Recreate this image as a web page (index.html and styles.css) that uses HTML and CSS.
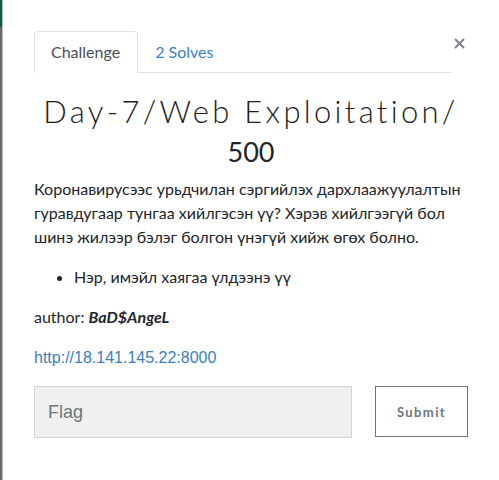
FILE: index.html
```html
<!DOCTYPE html>
<html>
<head>
<meta charset="utf-8">
<link rel="stylesheet" href="styles.css">
</head>
<body>
<div class="page">
  <div class="backdrop"><div class="backdrop-nav"></div></div>
  <div class="modal">
    <div class="modal-header">
      <ul class="tabs">
        <li class="tab active">Challenge</li>
        <li class="tab"><a class="tab-link" href="#">2 Solves</a></li>
      </ul>
      <button class="close" type="button" aria-label="Close">
        <svg width="11" height="11" viewBox="0 0 11 11"><path d="M1 1 L10 10 M10 1 L1 10" stroke="#7d838a" stroke-width="2" fill="none"/></svg>
      </button>
    </div>
    <div class="modal-body">
      <h3 class="challenge-name">Day-7/Web Exploitation/</h3>
      <h4 class="challenge-value">500</h4>
      <p class="desc">Коронавирусээс урьдчилан сэргийлэх дархлаажуулалтын гуравдугаар тунгаа хийлгэсэн үү? Хэрэв хийлгээгүй бол шинэ жилээр бэлэг болгон үнэгүй хийж өгөх болно.</p>
      <ul class="list">
        <li>Нэр, имэйл хаягаа үлдээнэ үү</li>
      </ul>
      <p class="desc">author: <em class="author">BaD$AngeL</em></p>
      <p class="desc"><a class="link" href="#">http://18.141.145.22:8000</a></p>
      <div class="flag-form">
        <input class="flag-input" type="text" placeholder="Flag">
        <button class="submit" type="button">Submit</button>
      </div>
    </div>
  </div>
</div>
</body>
</html>
```
FILE: styles.css
```css
* { box-sizing: border-box; }
html, body { margin: 0; padding: 0; background: #fff; }
body { font-family: Lato, "Noto Sans", sans-serif; color: #212529; font-size: 16px; line-height: 24px; }
.page { display: flex; width: 499px; height: 480px; overflow: hidden; }
.backdrop { width: 2px; flex: none; background: #6a6a6a; }
.backdrop-nav { height: 27px; background: #0b5f46; }
.modal { flex: 1; background: #fff; border-left: 1px solid #bdbdbd; padding: 31px 33px 0 31px; }
.modal-header { display: flex; align-items: flex-start; }
.tabs { list-style: none; margin: 0; padding: 0; display: flex; flex: 1; border-bottom: 1px solid #dee2e6; }
.tab { padding: 8px 17px 8px 16px; border: 1px solid transparent; border-top-left-radius: 4px; border-top-right-radius: 4px; margin-bottom: -1px; }
.tab.active { color: #495057; border-color: #dee2e6 #dee2e6 #fff; background: #fff; }
.tab-link { color: #3a7fbf; text-decoration: none; }
.close { border: 0; background: none; padding: 0; margin: 6px 3px 0 1px; width: 12px; height: 12px; display: flex; align-items: center; justify-content: center; cursor: pointer; }
.modal-body { padding-top: 0; }
.challenge-name { font-family: Lato, sans-serif; font-weight: 300; font-size: 31px; line-height: 40px; letter-spacing: 3.3px; text-align: center; margin: 18px 0 0; color: #1b1e21; white-space: nowrap; }
.challenge-value { font-family: Lato, sans-serif; font-weight: 400; font-size: 27px; line-height: 40px; text-align: center; margin: 1px 0 0; color: #212529; }
.desc { margin: 0 0 16px; }
.challenge-value + .desc { margin-top: 5px; }
.list { margin: 0 0 16px; padding-left: 40px; }
.author { font-weight: 700; font-style: italic; }
.link { color: #3a7fbf; text-decoration: none; font-family: "Liberation Sans", Arial, sans-serif; }
.flag-form { display: flex; align-items: flex-start; gap: 23px; }
.flag-input { width: 318px; height: 52px; background: #f0f0f0; border: 1px solid #ced4da; padding: 0 13px; font-family: "Liberation Sans", Arial, sans-serif; font-size: 18px; color: #495057; outline: none; }
.flag-input::placeholder { color: #6c757d; }
.submit { width: 93px; height: 51px; background: #fff; border: 1px solid #6c757d; color: #6c757d; font-family: Lato, sans-serif; font-weight: 700; font-size: 13px; letter-spacing: 1.4px; padding: 0; cursor: pointer; }
```
